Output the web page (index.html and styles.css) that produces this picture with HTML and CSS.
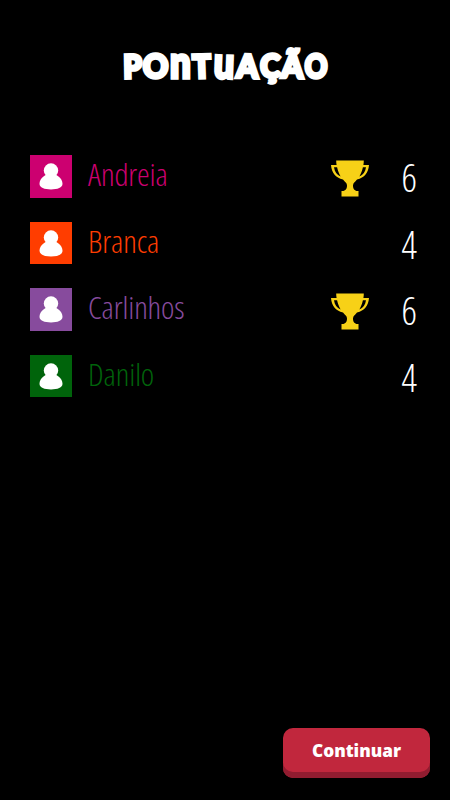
FILE: index.html
```
<!DOCTYPE html>
<html lang="pt">
<head>
    <meta charset="UTF-8">
    <meta name="viewport" content="width=device-width, initial-scale=1.0">
    <title>Pontuação</title>
    <link rel="stylesheet" href="styles.css">
</head>
<body>
    <svg class="symbols" width="0" height="0">
        <symbol id="person" viewBox="0 0 24 27">
            <circle cx="12" cy="7.500" r="7.200"/>
            <path d="M12 11c3 0 5.200 .6 7.500 2.500 2.500 2 4 4.500 4 7.300 0 4-5 5.700-11.500 5.700S0.500 24.800 0.500 20.800c0-2.800 1.500-5.300 4-7.300C6.800 11.600 9 11 12 11z"/>
        </symbol>
        <symbol id="trophy" viewBox="0 0 38 37">
            <path fill-rule="evenodd" d="M5.200 0.500h27.600c0 1.500-.1 3-.4 4.500H38c-.6 7.500-4.500 12.900-12 14.500-2 2.700-4 3.400-4 6 0 3.200 1.500 5.500 4.500 5.500h1v5.500h-17V31h1c3 0 4.500-2.300 4.500-5.500 0-2.600-2-3.300-4-6C4.500 17.900.6 12.500 0 5h5.600C5.300 3.500 5.200 2 5.200.500zM3 7.200c.7 4.600 2.800 7.800 6.600 9.200C8 13.500 6.800 10.500 6.100 7.200zM35 7.200c-.7 4.600-2.800 7.800-6.600 9.200 1.600-2.900 2.800-5.900 3.500-9.200z"/>
        </symbol>
    </svg>

    <h1 class="title"><span class="p">P</span><span class="o">O</span><span class="n">n</span><span class="t">T</span><span class="u">u</span><span class="a">A</span><span class="c">Ç</span><span class="a tilde">Ã</span><span class="o last">O</span></h1>

    <ul class="scores">
        <li class="player pink">
            <span class="avatar"><svg><use href="#person"/></svg></span>
            <span class="name">Andreia</span>
            <svg class="trophy"><use href="#trophy"/></svg>
            <span class="points">6</span>
        </li>
        <li class="player orange">
            <span class="avatar"><svg><use href="#person"/></svg></span>
            <span class="name">Branca</span>
            <span class="points">4</span>
        </li>
        <li class="player purple">
            <span class="avatar"><svg><use href="#person"/></svg></span>
            <span class="name">Carlinhos</span>
            <svg class="trophy"><use href="#trophy"/></svg>
            <span class="points">6</span>
        </li>
        <li class="player green">
            <span class="avatar"><svg><use href="#person"/></svg></span>
            <span class="name">Danilo</span>
            <span class="points">4</span>
        </li>
    </ul>

    <button class="continue">Continuar</button>
</body>
</html>
```

FILE: styles.css
```
* {
    box-sizing: border-box;
}
body {
    display: flex;
    flex-direction: column;
    height: 100vh;
    margin: 0;
    padding: 37px 20px 22px 29.500px;
    background-color: #000;
    color: #fff;
    font-family: "Open Sans", sans-serif;
}
.symbols {
    display: block;
    flex: none;
}
/* unicase title, every letter has its own width and a slight tilt */
.title {
    display: flex;
    justify-content: center;
    align-items: baseline;
    height: 50px;
    margin: 0;
    padding-right: 9.500px;
    font-family: Lato, sans-serif;
    font-size: 32px;
    line-height: 50px;
    font-weight: 900;
    -webkit-text-stroke: 3.500px #fff;
}
.title span {
    display: flex;
    justify-content: center;
    width: 24px;
}
.title .p {
    width: 19px;
    transform: rotate(-1deg) scaleX(0.92);
}
.title .o {
    width: 27px;
    transform: scaleX(0.97);
}
.title .n,
.title .u {
    width: 22.500px;
    font-size: 43px;
    transform: scaleX(0.85);
}
.title .t {
    width: 21.500px;
    transform: rotate(-2deg) scaleX(0.94);
}
.title .u {
    transform: rotate(2deg) scaleX(0.83);
}
.title .a {
    width: 25px;
    transform: rotate(2deg) scaleX(0.96);
}
.title .c {
    width: 20.500px;
    transform: scaleX(0.95);
}
.title .tilde {
    width: 23px;
}
.title .last {
    width: 24px;
    transform: scaleX(0.87);
}
.scores {
    list-style: none;
    margin: 68px 0 0;
    padding: 0;
}
.player {
    display: flex;
    height: 42.600px;
    margin-bottom: 24px;
    padding-right: 13px;
}
.avatar {
    display: flex;
    justify-content: center;
    width: 42.600px;
    height: 42.600px;
    padding-top: 8px;
}
.avatar svg {
    width: 24px;
    height: 27px;
    fill: #fff;
}
.name {
    flex: 1;
    margin-left: 16px;
    font-size: 32px;
    font-weight: 300;
    font-stretch: 75%;
    line-height: 38px;
    letter-spacing: -0.15px;
}
.trophy {
    width: 38px;
    height: 37px;
    margin-top: 4.500px;
    fill: #f7d117;
}
.points {
    width: 48px;
    font-size: 38px;
    font-weight: 300;
    font-stretch: 75%;
    line-height: 44px;
    text-align: right;
}
.pink {
    color: #cc0070;
}
.pink .avatar {
    background-color: #cc0070;
}
.orange {
    color: #ff3d00;
}
.orange .avatar {
    background-color: #ff3d00;
}
.purple {
    color: #874b9d;
}
.purple .avatar {
    background-color: #874b9d;
}
.green {
    color: #00640b;
}
.green .avatar {
    background-color: #00640b;
}
.player .points {
    color: #fff;
}
.continue {
    align-self: flex-end;
    width: 147px;
    height: 50px;
    margin-top: auto;
    padding: 0 0 6px;
    border: none;
    border-radius: 10px;
    background-color: #c1273d;
    box-shadow: inset 0 -6px 0 #911c30;
    color: #fff;
    font-family: "Open Sans", sans-serif;
    font-size: 17.200px;
    font-weight: 780;
    cursor: pointer;
}
```
